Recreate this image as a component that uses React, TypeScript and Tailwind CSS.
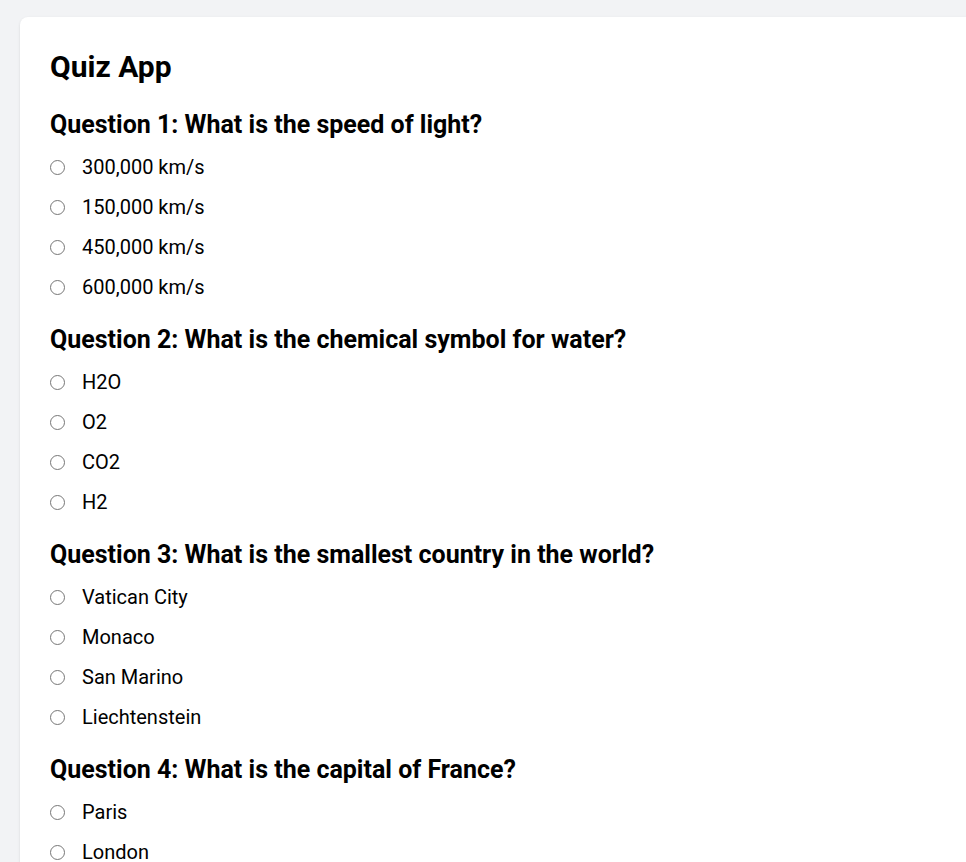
const questions = [
  {
    question: "What is the speed of light?",
    options: ["300,000 km/s", "150,000 km/s", "450,000 km/s", "600,000 km/s"],
  },
  {
    question: "What is the chemical symbol for water?",
    options: ["H2O", "O2", "CO2", "H2"],
  },
  {
    question: "What is the smallest country in the world?",
    options: ["Vatican City", "Monaco", "San Marino", "Liechtenstein"],
  },
  {
    question: "What is the capital of France?",
    options: ["Paris", "London", "Berlin", "Madrid"],
  },
];

const App = () => {
  return (
    <div
      className="h-[862px] overflow-hidden bg-[#f2f3f5] pt-[17px] pl-[20px]"
      style={{ fontFamily: "Roboto, 'Liberation Sans', sans-serif" }}
    >
      <div className="w-[1000px] min-h-[900px] rounded-lg bg-white p-[30px] text-black shadow-sm">
        <h1 className="h-[40px] text-[30px] font-bold leading-[40px]">
          Quiz App
        </h1>

        {questions.map((q, qi) => (
          <div key={qi} className={qi === 0 ? "mt-[22px]" : "mt-[17px]"}>
            <h2 className="h-[32px] text-[25px] font-bold leading-[32px]">
              Question {qi + 1}: {q.question}
            </h2>
            <div className="mt-[6px]">
              {q.options.map((opt) => (
                <label
                  key={opt}
                  className="flex h-[40px] items-center text-[20px]"
                >
                  <input
                    type="radio"
                    name={`q${qi}`}
                    value={opt}
                    className="m-0 mr-[17px] h-[15px] w-[15px] shrink-0 appearance-none rounded-full border-[1.5px] border-[#767676] bg-white checked:border-[4px] checked:border-blue-600"
                  />
                  {opt}
                </label>
              ))}
            </div>
          </div>
        ))}
      </div>
    </div>
  );
};

export default App;
